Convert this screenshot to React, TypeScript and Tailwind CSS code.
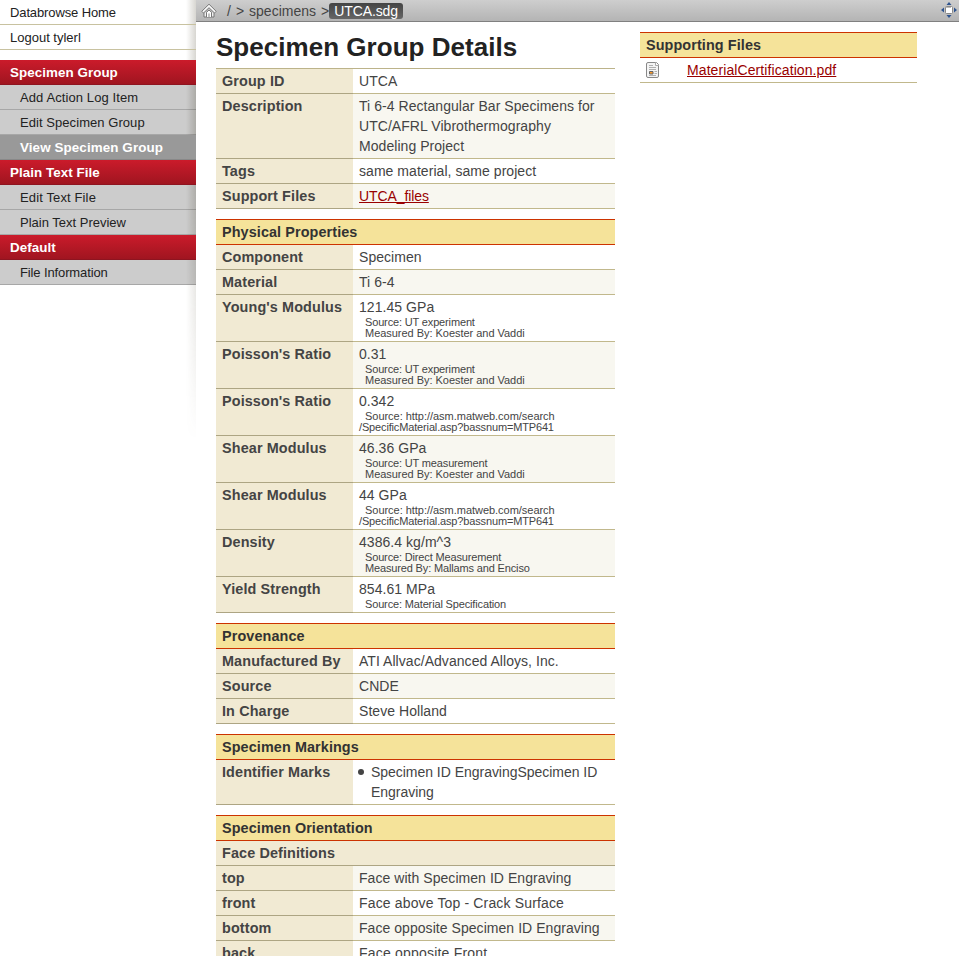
import type { ReactNode } from "react";

type Row = { label: string; value: ReactNode; shaded?: boolean };

function Measure({ value, lines }: { value: string; lines: string[] }) {
  return (
    <>
      <div className="leading-5">{value}</div>
      {lines.map((line) => (
        <div
          key={line}
          className={`text-[11px] leading-[11px] whitespace-nowrap ${
            line.startsWith("/") ? "" : "pl-1.5"
          } ${
            line.includes("Koester") || line.includes("http")
              ? "tracking-[-0.03px]"
              : "tracking-[-0.15px]"
          }`}
        >
          {line}
        </div>
      ))}
    </>
  );
}

const general: Row[] = [
  { label: "Group ID", value: "UTCA" },
  {
    label: "Description",
    value: (
      <>
        Ti 6-4 Rectangular Bar Specimens for
        <br />
        UTC/AFRL Vibrothermography
        <br />
        Modeling Project
      </>
    ),
    shaded: true,
  },
  { label: "Tags", value: "same material, same project" },
  {
    label: "Support Files",
    value: (
      <a href="#" className="tracking-[-0.1px] text-[#990000] underline">
        UTCA_files
      </a>
    ),
    shaded: true,
  },
];

const ut = ["Source: UT experiment", "Measured By: Koester and Vaddi"];
const matweb = ["Source: http://asm.matweb.com/search", "/SpecificMaterial.asp?bassnum=MTP641"];

const physical: Row[] = [
  { label: "Component", value: "Specimen" },
  { label: "Material", value: "Ti 6-4", shaded: true },
  { label: "Young's Modulus", value: <Measure value="121.45 GPa" lines={ut} /> },
  { label: "Poisson's Ratio", value: <Measure value="0.31" lines={ut} />, shaded: true },
  { label: "Poisson's Ratio", value: <Measure value="0.342" lines={matweb} /> },
  {
    label: "Shear Modulus",
    value: (
      <Measure
        value="46.36 GPa"
        lines={["Source: UT measurement", "Measured By: Koester and Vaddi"]}
      />
    ),
    shaded: true,
  },
  { label: "Shear Modulus", value: <Measure value="44 GPa" lines={matweb} /> },
  {
    label: "Density",
    value: (
      <Measure
        value="4386.4 kg/m^3"
        lines={["Source: Direct Measurement", "Measured By: Mallams and Enciso"]}
      />
    ),
    shaded: true,
  },
  {
    label: "Yield Strength",
    value: <Measure value="854.61 MPa" lines={["Source: Material Specification"]} />,
  },
];

const provenance: Row[] = [
  { label: "Manufactured By", value: "ATI Allvac/Advanced Alloys, Inc." },
  { label: "Source", value: "CNDE", shaded: true },
  { label: "In Charge", value: "Steve Holland" },
];

const markings: Row[] = [
  {
    label: "Identifier Marks",
    value: (
      <ul className="flex tracking-[-0.03px]">
        <li className="flex">
          <span className="mt-[7px] mr-[7px] -ml-px h-1.5 w-1.5 shrink-0 rounded-full bg-[#444]" />
          <span>
            Specimen ID EngravingSpecimen ID
            <br />
            Engraving
          </span>
        </li>
      </ul>
    ),
  },
];

const faces: Row[] = [
  { label: "top", value: "Face with Specimen ID Engraving", shaded: true },
  { label: "front", value: <span className="tracking-[0.15px]">Face above Top - Crack Surface</span> },
  { label: "bottom", value: "Face opposite Specimen ID Engraving", shaded: true },
  { label: "back", value: <span className="tracking-[0.2px]">Face opposite Front</span> },
];

function Heading({ children }: { children: ReactNode }) {
  return (
    <h2 className="border-y border-[#cc3300] bg-[#f5e39a] px-1.5 py-0.5 text-[14.4px] leading-5 font-bold tracking-[0.1px] text-[#333]">
      {children}
    </h2>
  );
}

function Rows({ rows }: { rows: Row[] }) {
  return (
    <>
      {rows.map((row, i) => (
        <div key={i} className="flex">
          <div className="w-[137px] shrink-0 border-b border-[#ada583] bg-[#f1ead3] px-1.5 py-0.5 text-[14.4px] leading-5 font-bold tracking-[0.12px] whitespace-nowrap">
            {row.label}
          </div>
          <div
            className={`flex-1 border-b border-[#c1b88c] px-1.5 py-0.5 tracking-[0.05px] whitespace-nowrap ${
              row.shaded ? "bg-[#f8f7f0]" : "bg-white"
            }`}
          >
            {row.value}
          </div>
        </div>
      ))}
    </>
  );
}

function MenuHeading({ children }: { children: ReactNode }) {
  return (
    <div className="h-[25px] border-b border-[#8e1420] bg-linear-to-b from-[#cb1b2b] to-[#a01520] pl-2.5 text-[13.4px] leading-[25px] font-bold tracking-[0.05px] text-white">
      {children}
    </div>
  );
}

function MenuItem({ children, active }: { children: ReactNode; active?: boolean }) {
  return (
    <div
      className={`h-[25px] border-b pl-5 leading-[25px] ${
        active
          ? "border-[#888] bg-[#999] text-[13.4px] font-bold tracking-[0.1px] text-white"
          : "border-black/18 bg-black/20 text-[13px] text-[#222]"
      }`}
    >
      {children}
    </div>
  );
}

function HomeIcon() {
  return (
    <svg className="mt-[3px] h-4 w-4" viewBox="0 0 16 16" fill="none">
      <path d="M3 9.500V14h10V9.500" fill="#f0f0f0" stroke="#777" />
      <path d="M.8 8.300 8 1.200l7.200 7.100-1.700 1.700L8 4.700 2.500 10z" fill="#f7f7f7" stroke="#777" strokeLinejoin="round" />
      <path d="M5.500 14V9.300L8 7l2.500 2.300V14" fill="#fff" stroke="#777" />
      <path d="M7.500 10.500h1V14h-1z" fill="#888" />
    </svg>
  );
}

function ExpandIcon() {
  return (
    <svg className="h-4 w-4" viewBox="0 0 16 16">
      <rect x="4.500" y="4.500" width="7" height="7" rx="1" fill="#fff" stroke="#888" />
      <path d="M5 5h5v1H5z" fill="#bbb" />
      <path d="M8 0l2.500 3h-5zM8 16l2.500-3h-5zM0 8l3-2.500v5zM16 8l-3-2.500v5z" fill="#2f548f" />
    </svg>
  );
}

function FileIcon() {
  return (
    <svg className="h-4 w-[14px]" viewBox="0 0 14 16" fill="none">
      <path d="M2 .5h8.500l2 2V14q0 1.500-1.500 1.500H2Q.5 15.500.5 14V2Q.5.500 2 .5z" fill="#f4f4f4" stroke="#888" />
      <path d="M9.500.5v3h3" fill="#fff" stroke="#aaa" />
      <path d="M3 3.500h4M3 5.500h7M3 7.500h7M8.500 9.500H11M8.500 11.500H11M3 13.500h7" stroke="#b0b0b0" />
      <path d="M3.500 9.500h3.500v2.500H3.500z" fill="#ff9c2a" stroke="#666" />
    </svg>
  );
}

export default function App() {
  return (
    <div className="flex h-[956px] w-[959px] overflow-hidden bg-white font-['Liberation_Sans',Arial,sans-serif] text-[14px] leading-5 text-[#444]">
      <aside className="relative w-[196px] shrink-0">
        <div className="absolute top-0 right-0 h-[440px] w-[10px] bg-linear-to-r from-transparent to-[#5a5440]/24 mask-[linear-gradient(to_bottom,black_0,black_40%,transparent)]" />
        <nav className="relative text-[13px] text-[#222]">
          <div className="h-[25px] border-b border-[#c8c2a0] pl-2.5 leading-[25px] tracking-[-0.12px]">
            Databrowse Home
          </div>
          <div className="mb-2.5 h-[25px] border-b border-[#c8c2a0] pl-2.5 leading-[25px]">Logout tylerl</div>
          <MenuHeading>Specimen Group</MenuHeading>
          <MenuItem>
            <span className="tracking-[0.1px]">Add Action Log Item</span>
          </MenuItem>
          <MenuItem>
            <span className="tracking-[0.06px]">Edit Specimen Group</span>
          </MenuItem>
          <MenuItem active>View Specimen Group</MenuItem>
          <MenuHeading>Plain Text File</MenuHeading>
          <MenuItem>
            <span className="tracking-[0.13px]">Edit Text File</span>
          </MenuItem>
          <MenuItem>Plain Text Preview</MenuItem>
          <MenuHeading>Default</MenuHeading>
          <MenuItem>
            <span className="tracking-[-0.12px]">File Information</span>
          </MenuItem>
        </nav>
      </aside>

      <main className="min-w-0 flex-1">
        <header className="flex h-[22px] border-b border-[#808080] bg-linear-to-b from-[#cecece] to-[#b4b4b4] pl-[5px]">
          <HomeIcon />
          <span className="ml-[10px] leading-[22px] whitespace-pre">/</span>
          <span className="ml-[5px] leading-[22px]">&gt;</span>
          <span className="ml-[5px] leading-[22px]">specimens</span>
          <span className="ml-[5px] leading-[22px]">&gt;</span>
          <span className="mt-[3px] h-4 w-[74px] rounded-[3px] bg-linear-to-b from-[#444] to-[#666] pl-[5px] leading-4 tracking-[-0.1px] text-white">
            UTCA.sdg
          </span>
          <span className="mt-[2px] mr-[2px] ml-auto">
            <ExpandIcon />
          </span>
        </header>

        <div className="flex items-start gap-[25px] pl-5">
          <section className="w-[399px]">
            <h1 className="h-[46px] pt-[9px] text-[26px] leading-8 font-bold tracking-[0.03px] whitespace-nowrap text-[#222]">
              Specimen Group Details
            </h1>
            <div className="flex flex-col gap-2.5">
              <div className="border-t border-[#bcb38a]">
                <Rows rows={general} />
              </div>
              <div>
                <Heading>Physical Properties</Heading>
                <Rows rows={physical} />
              </div>
              <div>
                <Heading>Provenance</Heading>
                <Rows rows={provenance} />
              </div>
              <div>
                <Heading>Specimen Markings</Heading>
                <Rows rows={markings} />
              </div>
              <div>
                <Heading>Specimen Orientation</Heading>
                <div className="border-b border-[#ada583] bg-[#f1ead3] px-1.5 py-0.5 text-[14.4px] leading-5 font-bold tracking-[0.12px]">
                  Face Definitions
                </div>
                <Rows rows={faces} />
              </div>
            </div>
          </section>

          <section className="mt-2.5 w-[277px]">
            <Heading>Supporting Files</Heading>
            <div className="flex h-[25px] border-b border-[#c1b88c] pt-0.5 pl-1.5">
              <span className="mt-[2px] w-[41px]">
                <FileIcon />
              </span>
              <a href="#" className="tracking-[0.09px] text-[#990000] underline">
                MaterialCertification.pdf
              </a>
            </div>
          </section>
        </div>
      </main>
    </div>
  );
}
